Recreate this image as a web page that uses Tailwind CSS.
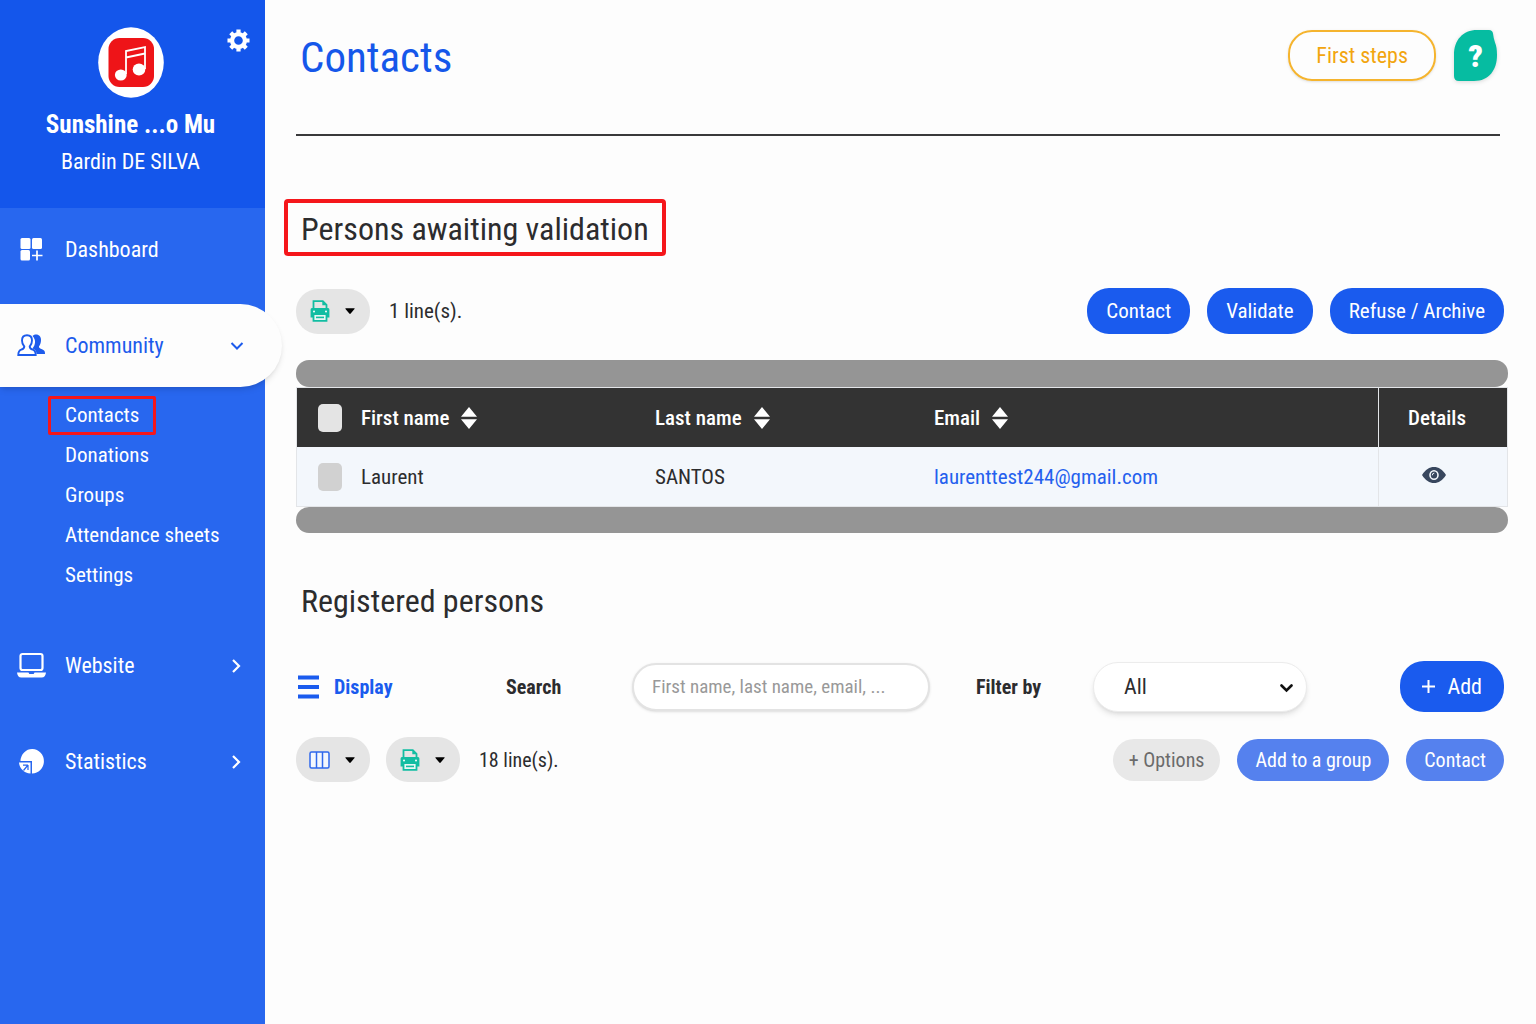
<!DOCTYPE html>
<html lang="en">
<head>
    <meta charset="UTF-8">
    <meta name="viewport" content="width=device-width, initial-scale=1.0">
    <title>Contacts | Sunshine</title>
    <script src="https://cdn.jsdelivr.net/npm/@tailwindcss/browser@4"></script>
    <style>
        body { font-family: 'Roboto Condensed', Roboto, 'Liberation Sans', sans-serif; }
    </style>
</head>
<body class="flex min-h-screen bg-[#fdfdfd] text-[21px] leading-6 text-[#2c2c2e]">
    <!-- Shared icons -->
    <svg class="hidden">
        <symbol id="icon-print" viewBox="0 0 20 22">
            <path d="M3.5 9V1.2h9.3l3.7 3.6V9" fill="none" stroke="#12bda2" stroke-width="1.8"/>
            <path d="M12.3 1v4.2h4.2z" fill="#12bda2"/>
            <path d="M2.500 8h15A1.600 1.600 0 0 1 19.400 9.600V17.500H.6V9.600A1.600 1.600 0 0 1 2.500 8z" fill="#12bda2"/>
            <path d="M3.500 14h13v6.900h-13z" fill="#e8f7f4" stroke="#12bda2" stroke-width="1.800"/>
            <path d="M6 17.400h8" stroke="#12bda2" stroke-width="1.600"/>
            <circle cx="4" cy="11.500" r="1" fill="#fff"/>
            <circle cx="16" cy="11.500" r="1" fill="#fff"/>
        </symbol>
        <symbol id="icon-caret" viewBox="0 0 10 6">
            <path d="M.8.2h8.400q.8 0 .3.700L5.700 5.500q-.7.800-1.400 0L.5.900Q0 .2.800.2z" fill="#000"/>
        </symbol>
        <symbol id="icon-sort" viewBox="0 0 16 22">
            <path d="M8 0l8 9.700H0zM8 22l8-9.700H0z" fill="#fff"/>
        </symbol>
        <symbol id="icon-right" viewBox="0 0 10 16">
            <path d="M2 2l6 6-6 6" fill="none" stroke="#fff" stroke-width="2.200"/>
        </symbol>
    </svg>

    <!-- Sidebar -->
    <aside class="relative z-10 w-[265px] shrink-0 bg-[#2867ef] text-[22px] text-white">
        <div class="relative flex h-[208px] flex-col items-center bg-[#1456eb] pt-[27px] pr-1">
            <svg class="h-[71px] w-[66px]" viewBox="0 0 66 71">
                <ellipse cx="33" cy="35.500" rx="32.800" ry="35.300" fill="#fff"/>
                <rect x="10.500" y="11" width="45.500" height="49" rx="11" fill="#ee1418"/>
                <path d="M28 47V24l19-4v22M28 30.500l19-4" fill="none" stroke="#fff" stroke-width="1.800"/>
                <ellipse cx="22.800" cy="48" rx="5.900" ry="5.500" fill="#fff"/>
                <ellipse cx="41" cy="42.500" rx="6.300" ry="6" fill="#fff"/>
            </svg>
            <p class="mt-[13px] text-[25px] leading-7 font-bold">Sunshine ...o Mu</p>
            <p class="mt-[11px]">Bardin DE SILVA</p>
            <button type="button" aria-label="Account settings" class="absolute top-[29px] right-[15px]">
                <svg class="size-[23px]" viewBox="0 0 24 24" fill="none" stroke="#fff">
                    <circle cx="12" cy="12" r="6.700" stroke-width="4.400"/>
                    <path d="M12 .5v4M12 19.500v4M.5 12h4M19.500 12h4M3.900 3.900l2.800 2.800M17.300 17.300l2.800 2.800M3.900 20.100l2.800-2.800M17.300 6.700l2.800-2.800" stroke-width="4.400"/>
                </svg>
            </button>
        </div>

        <nav class="flex flex-col gap-[13px]">
            <a href="#" class="flex h-[83px] items-center pl-[17px]">
                <svg class="h-7 w-[29px]" viewBox="0 0 29 28" fill="#fff">
                    <rect x="3.500" y="2" width="10" height="11" rx="1.500"/>
                    <rect x="15" y="2" width="10" height="11" rx="1.500"/>
                    <rect x="3.500" y="14" width="9.500" height="10.500" rx="1.500"/>
                    <path d="M20 14.500v10M15 19.500h10.500" stroke="#fff" stroke-width="1.700"/>
                </svg>
                <span class="ml-[19px]">Dashboard</span>
            </a>
            <div>
                <a href="#" class="-mr-[17px] flex h-[83px] items-center rounded-r-[42px] bg-[#fdfdfd] pr-[38px] pl-[17px] text-[#1d5bec] shadow-md">
                    <svg class="h-7 w-[29px]" viewBox="0 0 29 28">
                        <path d="M15.500 4C17 1.700 24 1.300 24 8c0 3-1 5-2 6.300 0 1.700.5 2 3.500 3.200 2 .8 2.500 2 2.500 4.500h-8.500c0-3-1.500-4.500-4-5.500C18.300 13 19.500 8 15.500 4z" fill="#1d5bec"/>
                        <path d="M10 3.200c3.500 0 5 2.300 5 5.300 0 2.700-1 4.700-2.300 6 0 2 .6 2.400 3 3.200 2.300.8 3 2 3 5.300H1.300c0-3.300.7-4.500 3-5.300 2.400-.8 3-1.200 3-3.200C6 13.200 5 11.200 5 8.500c0-3 1.500-5.300 5-5.300z" fill="#fff" stroke="#1d5bec" stroke-width="1.900"/>
                    </svg>
                    <span class="ml-[19px]">Community</span>
                    <svg class="ml-auto h-2 w-[14px]" viewBox="0 0 14 8"><path d="M1.500 1L7 6.500 12.500 1" fill="none" stroke="#1d5bec" stroke-width="2"/></svg>
                </a>
                <ul class="pt-2 pb-4 pl-12 text-[21px]">
                    <li class="flex h-10 items-center"><a href="#" class="block rounded-xs border-3 border-[#f5161b] px-[14px] leading-[33px]">Contacts</a></li>
                    <li class="flex h-10 items-center pl-[17px]"><a href="#">Donations</a></li>
                    <li class="flex h-10 items-center pl-[17px]"><a href="#">Groups</a></li>
                    <li class="flex h-10 items-center pl-[17px]"><a href="#">Attendance sheets</a></li>
                    <li class="flex h-10 items-center pl-[17px]"><a href="#">Settings</a></li>
                </ul>
            </div>
            <a href="#" class="flex h-[83px] items-center pr-6 pl-[17px]">
                <svg class="h-7 w-[29px]" viewBox="0 0 29 28">
                    <rect x="3.500" y="2" width="22" height="16" rx="2" fill="none" stroke="#fff" stroke-width="2.200"/>
                    <path d="M0 20.500h11.500l.8 1.500h4.400l.8-1.500H29c-.3 3-1.800 5-4.300 5H4.300c-2.500 0-4-2-4.300-5z" fill="#fff"/>
                </svg>
                <span class="ml-[19px]">Website</span>
                <svg class="ml-auto h-4 w-[10px]"><use href="#icon-right"/></svg>
            </a>
            <a href="#" class="flex h-[83px] items-center pr-6 pl-[17px]">
                <svg class="h-7 w-[29px]" viewBox="0 0 29 28">
                    <path d="M3.500 13A11.700 12.200 0 1 1 15 25.500V13z" fill="#fff"/>
                    <path d="M2 14.500h11.500v11C7 25 2.500 20.500 2 14.500z" fill="#fff"/>
                    <path d="M11 17l-4.500 5.500M6 17.200h5M11 17v5" fill="none" stroke="#2867ef" stroke-width="1.200"/>
                </svg>
                <span class="ml-[19px]">Statistics</span>
                <svg class="ml-auto h-4 w-[10px]"><use href="#icon-right"/></svg>
            </a>
        </nav>
    </aside>

    <!-- Main Content -->
    <main class="min-w-0 flex-1 pt-[30px] pr-7 pb-8 pl-[31px]">
        <header class="mr-2 flex items-center border-b-2 border-[#39393b] pb-[53px]">
            <h1 class="pt-1 pl-1 text-[43px] leading-[47px] text-[#1557ea]">Contacts</h1>
            <button type="button" class="ml-auto h-[51px] rounded-[24px] border-2 border-[#f5b42e] px-[26px] text-[22px] text-[#f2a50f] shadow-sm">First steps</button>
            <button type="button" aria-label="Help" class="mr-[3px] ml-[18px] grid place-items-center">
                <svg class="col-start-1 row-start-1 h-[51px] w-[43px] drop-shadow-sm" viewBox="0 0 43 51">
                    <path d="M23 0h12q3.500 0 4 3.500.5 4.500 2 9Q43 17 43 25c0 15-8 26-23 26H5q-5 0-5-5V25C0 10 9 0 23 0z" fill="#06bca1"/>
                </svg>
                <span class="relative col-start-1 row-start-1 text-[32px] leading-8 font-black text-white">?</span>
            </button>
        </header>

        <!-- Persons awaiting validation -->
        <section class="mt-[63px]">
            <h2 class="-ml-3 inline-block rounded-sm border-4 border-[#f5161b] px-[13px] pt-1 text-[32px] leading-[45px]">Persons awaiting validation</h2>
            <div class="mt-8 flex items-center pr-1">
                <button type="button" aria-label="Print" class="flex h-[45px] w-[74px] items-center gap-[15px] rounded-[22px] bg-[#e5e5e5] pl-[14px]">
                    <svg class="h-[22px] w-5"><use href="#icon-print"/></svg>
                    <svg class="h-[6px] w-[10px]"><use href="#icon-caret"/></svg>
                </button>
                <span class="ml-[19px]">1 line(s).</span>
                <div class="ml-auto flex gap-[17px] text-white">
                    <button type="button" class="h-[46px] rounded-[22px] bg-[#1a5bee] px-[19px]">Contact</button>
                    <button type="button" class="h-[46px] rounded-[22px] bg-[#1a5bee] px-[19px]">Validate</button>
                    <button type="button" class="h-[46px] rounded-[22px] bg-[#1a5bee] px-[19px]">Refuse / Archive</button>
                </div>
            </div>

            <div class="mt-[26px]">
                <div class="h-[27px] rounded-[13px] bg-[#959595]"></div>
                <table class="w-full table-fixed border-separate border-spacing-0 border border-[#e3e5e8] text-left">
                    <colgroup>
                        <col class="w-16">
                        <col class="w-[294px]">
                        <col class="w-[279px]">
                        <col>
                        <col class="w-[129px]">
                    </colgroup>
                    <thead class="bg-[#333333] text-white">
                        <tr class="h-[59px]">
                            <th class="pl-[21px]"><input type="checkbox" aria-label="Select all" class="block h-7 w-6 appearance-none rounded-[5px] bg-[#e4e4e4]"></th>
                            <th class="font-medium"><span class="flex items-center gap-3">First name <svg class="h-[22px] w-4"><use href="#icon-sort"/></svg></span></th>
                            <th class="font-medium"><span class="flex items-center gap-3">Last name <svg class="h-[22px] w-4"><use href="#icon-sort"/></svg></span></th>
                            <th class="font-medium"><span class="flex items-center gap-3">Email <svg class="h-[22px] w-4"><use href="#icon-sort"/></svg></span></th>
                            <th class="border-l border-[#e3e5e8] pr-3 text-center font-medium">Details</th>
                        </tr>
                    </thead>
                    <tbody class="bg-[#f3f7fc]">
                        <tr class="h-[59px]">
                            <td class="pl-[21px]"><input type="checkbox" aria-label="Select Laurent SANTOS" class="block h-7 w-6 appearance-none rounded-[5px] bg-[#d1d1d1]"></td>
                            <td>Laurent</td>
                            <td>SANTOS</td>
                            <td><a href="#" class="text-[#2460ee]">laurenttest244@gmail.com</a></td>
                            <td class="border-l border-[#e3e5e8] pr-[18px] pb-1">
                                <button type="button" aria-label="View details" class="mx-auto block">
                                    <svg class="h-4 w-6" viewBox="0 0 24 16">
                                        <path d="M0 8C3.500 2.500 7.500 0 12 0s8.500 2.500 12 8c-3.500 5.500-7.500 8-12 8S3.500 13.500 0 8z" fill="#38475e"/>
                                        <ellipse cx="12" cy="8" rx="4" ry="4.300" fill="none" stroke="#f3f7fc" stroke-width="1.600"/>
                                        <path d="M10.300 8.300q0-2.200 2-2.200" fill="none" stroke="#f3f7fc"/>
                                    </svg>
                                </button>
                            </td>
                        </tr>
                    </tbody>
                </table>
                <div class="h-[26px] rounded-[13px] bg-[#959595]"></div>
            </div>
        </section>

        <!-- Registered persons -->
        <section class="mt-12">
            <h2 class="pl-[5px] text-[32px] leading-10">Registered persons</h2>
            <div class="mt-10 flex items-center pr-1 text-[20px]">
                <button type="button" class="flex w-[210px] items-center gap-[15px] pl-[2px] font-bold text-[#1a5bee]">
                    <svg class="h-6 w-[21px]" viewBox="0 0 21 24"><path d="M0 2.500h21M0 12h21M0 21.500h21" stroke="#1a5bee" stroke-width="4"/></svg>
                    Display
                </button>
                <label for="search" class="w-[126px] font-bold">Search</label>
                <input id="search" type="text" placeholder="First name, last name, email, ..." class="h-12 w-[298px] rounded-[24px] border-2 border-[#e3e3e3] bg-white pr-4 pl-[18px] text-[19px] shadow-sm placeholder:text-[#999999]">
                <label for="filter" class="ml-[46px] w-[117px] font-bold">Filter by</label>
                <div class="relative w-[214px]">
                    <select id="filter" class="h-[50px] w-full appearance-none rounded-[25px] border border-[#ececec] bg-white pl-[30px] text-[22px] shadow-md">
                        <option>All</option>
                    </select>
                    <svg class="pointer-events-none absolute top-[22px] right-[14px] h-[9px] w-[13px]" viewBox="0 0 13 9"><path d="M1.500 1.500l5 5 5-5" fill="none" stroke="#111" stroke-width="2.600" stroke-linecap="round"/></svg>
                </div>
                <button type="button" class="ml-auto flex h-[51px] items-center gap-3 rounded-[24px] bg-[#1a5bee] px-[22px] text-[22px] text-white">
                    <svg class="size-[13px]" viewBox="0 0 13 13"><path d="M6.500 0v13M0 6.500h13" stroke="#fff" stroke-width="2"/></svg>
                    Add
                </button>
            </div>
            <div class="mt-[25px] flex items-center pr-1 text-[20px]">
                <button type="button" aria-label="Columns" class="flex h-[45px] w-[74px] items-center gap-[15px] rounded-[22px] bg-[#e5e5e5] pl-[13px]">
                    <svg class="h-[18px] w-[21px]" viewBox="0 0 21 18" fill="#f4f7fd" stroke="#2f68ec" stroke-width="1.500"><rect x="1" y="1" width="19" height="16" rx="1.500"/><path d="M7.500 1v16M13.500 1v16"/></svg>
                    <svg class="h-[6px] w-[10px]"><use href="#icon-caret"/></svg>
                </button>
                <button type="button" aria-label="Print" class="ml-4 flex h-[45px] w-[74px] items-center gap-[15px] rounded-[22px] bg-[#e5e5e5] pl-[14px]">
                    <svg class="h-[22px] w-5"><use href="#icon-print"/></svg>
                    <svg class="h-[6px] w-[10px]"><use href="#icon-caret"/></svg>
                </button>
                <span class="ml-[19px]">18 line(s).</span>
                <div class="ml-auto flex gap-[17px] text-white">
                    <button type="button" class="h-[42px] rounded-[21px] bg-[#e8e8e8] px-4 text-[#6b6b6b]">+ Options</button>
                    <button type="button" class="h-[42px] rounded-[21px] bg-[#5581ee] px-[18px]">Add to a group</button>
                    <button type="button" class="h-[42px] rounded-[21px] bg-[#5581ee] px-[18px]">Contact</button>
                </div>
            </div>
        </section>
    </main>
</body>
</html>
